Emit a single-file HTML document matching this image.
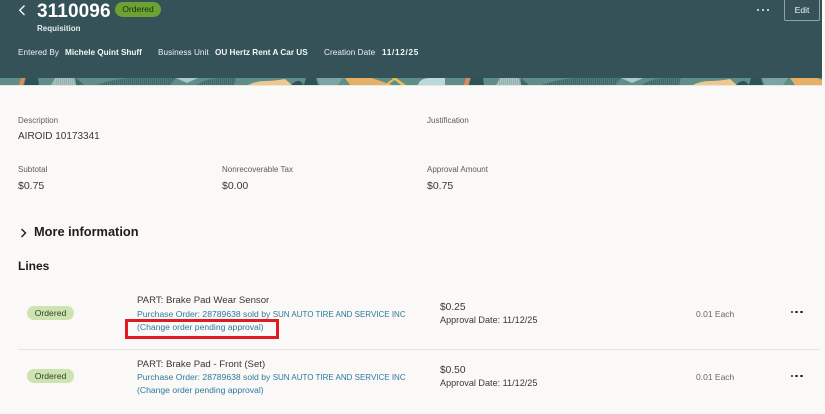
<!DOCTYPE html>
<html lang="en">
<head>
<meta charset="utf-8">
<title>Requisition 3110096</title>
<style>
html,body{margin:0;padding:0;width:825px;height:414px;overflow:hidden;background:#fbf9f8;}
body{position:relative;font-family:"Liberation Sans",sans-serif;color:#312d2a;filter:blur(.3px);}
.t{position:absolute;white-space:nowrap;line-height:1;}
.hdr{position:absolute;left:0;top:0;width:822px;height:78px;background:#345257;}
.w{color:#eef3f3;font-size:8.2px;letter-spacing:.05px;}
.wb{color:#f4f7f7;font-size:8.2px;font-weight:bold;}
.lab{font-size:8px;color:#5f5b57;}
.val{font-size:10.5px;color:#3a3633;}
.link{font-size:8.6px;color:#2b7a9c;}
.link span{font-size:8px;}
.pill{position:absolute;background:#cde3b0;border-radius:7px;width:47px;height:14px;left:27px;font-size:8.6px;line-height:14px;text-align:center;color:#33402a;}
.dots{position:absolute;display:flex;gap:2.4px;}
.dots i{display:block;width:2.6px;height:2.6px;border-radius:50%;background:#2a2a2a;}
</style>
</head>
<body>
<div class="hdr"></div>
<svg style="position:absolute;left:0;top:78px" width="822" height="7" viewBox="0 0 822 7">
  <defs>
    <pattern id="h" width="2" height="2" patternUnits="userSpaceOnUse"><rect width="2" height="2" fill="#4e7c78"/><rect width="1" height="2" fill="#3f686a"/></pattern>
    <pattern id="l" width="2" height="2" patternUnits="userSpaceOnUse"><rect width="2" height="2" fill="#a9c3c1"/><rect width="1" height="2" fill="#95b2b0"/></pattern>
    <g id="b">
      <rect x="0" y="0" width="445" height="7" fill="#5f8e88"/>
      <polygon points="21,0 25,0 23,7 19,7" fill="#e9874f"/>
      <polygon points="26,0 38,0 39,7 24,7" fill="#2f5257"/>
      <polygon points="55,0 74,0 76,7 51,7" fill="url(#l)"/>
      <polygon points="76,0 84,7 76,7" fill="#3e6a6b"/>
      <path d="M96 7Q125 -3 160 0L176 0 170 7Z" fill="url(#h)"/>
      <polygon points="176,0 198,0 187,5" fill="#a6cbc8"/>
      <path d="M196 7Q210 -2 236 0L234 7Z" fill="url(#h)"/>
      <path d="M248 7Q256 3 265 3T285 1L292 7Z" fill="#f0c78d"/>
      <path d="M291 7Q296 2 300 3L304 7Z" fill="#2f5257"/>
      <polygon points="306,0 316,0 318,7 304,7" fill="#2f5257"/>
      <polygon points="317,0 343,0 338,7 320,7" fill="#7aa5a2"/>
      <polygon points="345,0 372,0 392,7 350,7" fill="#e5b063"/>
      <polygon points="384,7 394,0 397,0 388,7" fill="#e9c04f"/>
      <polygon points="392,0 396,0 406,7 401,7" fill="#e9c04f"/>
      <path d="M418 7Q420 0 430 0H445V7Z" fill="#bcd8d9"/>
    </g>
  </defs>
  <use href="#b" x="0"/>
  <use href="#b" x="445"/>
</svg>
<div style="position:absolute;left:0;top:85px;width:822px;height:1px;background:#e6e6e3"></div>

<svg style="position:absolute;left:18px;top:4px" width="9" height="13" viewBox="0 0 9 13"><path d="M6.5 1.5 L1.8 6.3 L6.5 11" fill="none" stroke="#f2f5f5" stroke-width="1.4"/></svg>
<div class="t" style="left:37px;top:2px;font-size:19px;font-weight:bold;color:#fff;letter-spacing:.1px">3110096</div>
<div style="position:absolute;left:115px;top:2px;width:46px;height:15px;background:#6aa233;border-radius:8px;font-size:8.6px;line-height:15px;text-align:center;color:#1d2f12">Ordered</div>
<div class="t wb" style="left:37px;top:25px;font-weight:bold;color:#e4ecec;font-size:8px">Requisition</div>

<div class="t w" style="left:18px;top:49px">Entered By</div>
<div class="t wb" style="left:65px;top:49px">Michele Quint Shuff</div>
<div class="t w" style="left:158px;top:49px">Business Unit</div>
<div class="t wb" style="left:215px;top:49px">OU Hertz Rent A Car US</div>
<div class="t w" style="left:324px;top:49px">Creation Date</div>
<div class="t wb" style="left:382px;top:49px;letter-spacing:.7px">11/12/25</div>

<div class="dots" style="left:757px;top:8.5px;gap:2.4px"><i style="background:#f2f5f5;width:2.4px;height:2.4px"></i><i style="background:#f2f5f5;width:2.4px;height:2.4px"></i><i style="background:#f2f5f5;width:2.4px;height:2.4px"></i></div>
<div style="position:absolute;left:784px;top:-2px;width:34px;height:21px;border:1px solid #8ea3a5;border-radius:2px;box-sizing:content-box;color:#f2f5f5;font-size:8.6px;line-height:23px;text-align:center">Edit</div>

<div class="t lab" style="left:18px;top:117px">Description</div>
<div class="t val" style="left:18px;top:132px;font-size:10px">AIROID 10173341</div>
<div class="t lab" style="left:427px;top:117px">Justification</div>

<div class="t lab" style="left:18px;top:166px">Subtotal</div>
<div class="t val" style="left:18px;top:181px">$0.75</div>
<div class="t lab" style="left:222px;top:166px">Nonrecoverable Tax</div>
<div class="t val" style="left:222px;top:181px">$0.00</div>
<div class="t lab" style="left:427px;top:166px">Approval Amount</div>
<div class="t val" style="left:427px;top:181px">$0.75</div>

<svg style="position:absolute;left:20px;top:227px" width="8" height="12" viewBox="0 0 8 12"><path d="M1.5 2 L5.5 6 L1.5 10" fill="none" stroke="#1f1d1b" stroke-width="1.4"/></svg>
<div class="t" style="left:34px;top:226px;font-size:12.8px;font-weight:bold;color:#1f1d1b">More information</div>
<div class="t" style="left:18px;top:260px;font-size:12px;font-weight:bold;color:#1f1d1b">Lines</div>

<div class="pill" style="top:305.5px">Ordered</div>
<div class="t val" style="left:137px;top:296px;font-size:9.6px">PART: Brake Pad Wear Sensor</div>
<div class="t link" style="left:137px;top:310px">Purchase Order: 28789638 sold by <span>SUN AUTO TIRE AND SERVICE INC</span></div>
<div class="t link" style="left:137px;top:323px">(Change order pending approval)</div>
<div style="position:absolute;left:125px;top:319px;width:154px;height:20px;box-sizing:border-box;border:3.5px solid #e01b24"></div>
<div class="t val" style="left:440px;top:302.5px;font-size:10.2px">$0.25</div>
<div class="t" style="left:440px;top:316px;font-size:9.1px;color:#3a3633">Approval Date: 11/12/25</div>
<div class="t" style="left:696px;top:310px;font-size:8.5px;color:#6b6763">0.01 Each</div>
<div class="dots" style="left:790.5px;top:310.5px"><i></i><i></i><i></i></div>

<div style="position:absolute;left:18px;top:349px;width:802px;height:1px;background:#e6e4e1"></div>

<div class="pill" style="top:369px">Ordered</div>
<div class="t val" style="left:137px;top:359.5px;font-size:9.6px">PART: Brake Pad - Front (Set)</div>
<div class="t link" style="left:137px;top:373px">Purchase Order: 28789638 sold by <span>SUN AUTO TIRE AND SERVICE INC</span></div>
<div class="t link" style="left:137px;top:386px">(Change order pending approval)</div>
<div class="t val" style="left:440px;top:366px;font-size:10.2px">$0.50</div>
<div class="t" style="left:440px;top:379px;font-size:9.1px;color:#3a3633">Approval Date: 11/12/25</div>
<div class="t" style="left:696px;top:373px;font-size:8.5px;color:#6b6763">0.01 Each</div>
<div class="dots" style="left:790.5px;top:374.5px"><i></i><i></i><i></i></div>
</body>
</html>
